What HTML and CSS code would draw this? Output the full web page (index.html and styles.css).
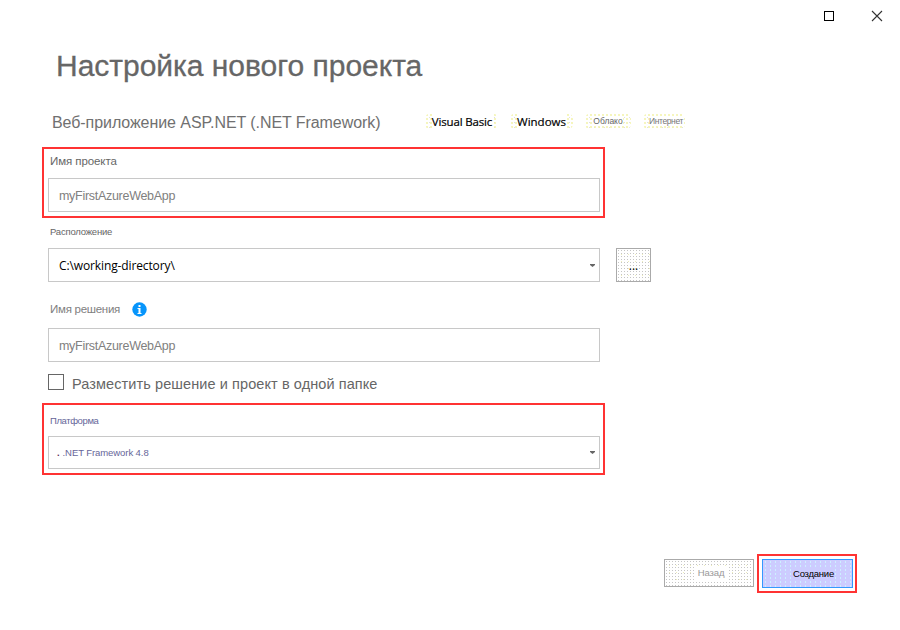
FILE: index.html
```
<!DOCTYPE html>
<html lang="ru">
<head>
<meta charset="utf-8">
<title>Настройка нового проекта</title>
<link rel="stylesheet" href="styles.css">
</head>
<body>
<main class="window">
  <header class="titlebar">
    <svg width="12" height="12" viewBox="0 0 12 12"><rect x="1.5" y="1.5" width="9" height="9" fill="none" stroke="#000"/></svg>
    <svg width="12" height="12" viewBox="0 0 12 12"><path d="M1 1l10 10M11 1L1 11" stroke="#333" stroke-width="1.1"/></svg>
  </header>
  <h1><span>Настройка нового проекта</span></h1>
  <div class="summary">
    <span class="template">Веб-приложение ASP.NET (.NET Framework)</span>
    <span class="tag basic"><b>Visual Basic</b></span>
    <span class="tag windows"><b>Windows</b></span>
    <span class="tag cloud"><b>Облако</b></span>
    <span class="tag web"><b>Интернет</b></span>
  </div>
  <section class="marked project">
    <div class="label">Имя проекта</div>
    <div class="field muted"><span>myFirstAzureWebApp</span></div>
  </section>
  <section class="group location">
    <div class="label small">Расположение</div>
    <div class="row">
      <div class="field path"><span>C:\working-directory\</span><svg class="arrow" width="5" height="3" viewBox="0 0 5 3"><path d="M0 0h5v1L2.500 3L0 1z" fill="#666"/></svg></div>
      <div class="browse dither">...</div>
    </div>
  </section>
  <section class="group solution">
    <div class="label solution-label"><span>Имя решения</span><svg width="15" height="15" viewBox="0 0 15 15"><circle cx="7.500" cy="7.500" r="7.200" fill="#0795fb"/><path d="M6.500 3h2v2h-2zM5.500 6h3v5h1v1h-4v-1h1V7h-1z" fill="#fff"/></svg></div>
    <div class="field muted"><span>myFirstAzureWebApp</span></div>
  </section>
  <div class="check"><span class="box"></span><span class="check-text">Разместить решение и проект в одной папке</span></div>
  <section class="marked platform">
    <div class="label small">Платформа</div>
    <div class="field"><span><i>.</i>.NET Framework 4.8</span><svg class="arrow" width="5" height="3" viewBox="0 0 5 3"><path d="M0 0h5v1L2.500 3L0 1z" fill="#666"/></svg></div>
  </section>
  <footer>
    <div class="button dither"><span class="back">Назад</span></div>
    <div class="marked action"><div class="button create"><span>Создание</span></div></div>
  </footer>
</main>
</body>
</html>
```

FILE: styles.css
```
* { box-sizing: border-box; }
body { margin: 0; background: #fff; font-family: "Liberation Sans", Arial, sans-serif; color: #666; }
.window { width: 900px; height: 630px; overflow: hidden; }
svg { display: block; flex: none; }
.titlebar { height: 32px; display: flex; justify-content: flex-end; align-items: center; gap: 36px; padding-right: 17px; }
h1 { margin: 14px 0 0 56px; height: 40px; font-size: 30px; line-height: 40px; font-weight: 400; letter-spacing: -.02px; white-space: nowrap; -webkit-text-stroke: .3px #666; }
.summary { display: flex; align-items: center; height: 24px; margin: 23px 0 0 52px; white-space: nowrap; }
.template { width: 373px; font-size: 16px; line-height: 24px; padding-top: 3px; letter-spacing: -.07px; color: #707070; }
.tag { height: 17px; line-height: 17px; border-radius: 6px; text-align: center; background: radial-gradient(circle, #f2f2a6 0.600px, transparent 1px) 0 0 / 4px 4px, radial-gradient(circle, #dedede 0.600px, transparent 1px) 2px 2px / 5px 5px; }
.tag b { background: #fff; font-weight: 400; }
.basic { width: 73px; padding-left: 1px; font: 11.5px/17px "Open Sans", sans-serif; letter-spacing: -.16px; color: #000; }
.windows { width: 63px; margin-left: 12px; font: 11.5px/17px "Open Sans", sans-serif; color: #000; }
.basic, .windows { -webkit-text-stroke: .2px #000; }
.cloud { width: 46px; margin-left: 12px; font-size: 8.500px; }
.web { width: 42px; margin-left: 12px; padding-left: 4px; font-size: 8.500px; letter-spacing: -.4px; color: #777; }
.marked { border: 2px solid #ff3333; }
.project { margin: 14px 0 0 42px; width: 563px; height: 71px; padding: 0 3px 0 4px; }
.label { height: 29px; padding-left: 2px; font-size: 11.500px; line-height: 25px; letter-spacing: -.08px; }
.small { font-size: 9.500px; letter-spacing: -.2px; }
.field { width: 552px; height: 34px; border: 1px solid #c8c8c8; padding: 0 4px 0 10px; display: flex; align-items: center; justify-content: space-between; font-size: 12px; white-space: nowrap; }
.muted { color: #808080; font-size: 12.500px; letter-spacing: -.29px; padding-top: 1px; }
.group { margin-left: 48px; }
.location { height: 64px; }
.location .label { height: 30px; line-height: 28px; }
.row { display: flex; gap: 16px; }
.path { font-family: "Open Sans", sans-serif; letter-spacing: -.12px; color: #000; }
.dither { border: 1px solid #aaa; background: radial-gradient(circle, #c5c5c5 .7px, transparent 1px) 0 0 / 3px 3px, radial-gradient(circle, #eeeebb .6px, transparent 1px) 1px 2px / 7px 7px; }
.browse { width: 35px; height: 34px; text-align: center; font: 12px/34px "Open Sans", sans-serif; color: #000; }
.solution { margin-top: 19px; }
.solution-label { display: flex; align-items: center; gap: 12px; height: 27px; padding-bottom: 11px; color: #808080; line-height: 16px; letter-spacing: -.27px; }
.check { display: flex; align-items: center; gap: 8px; height: 16px; margin: 12px 0 0 48px; }
.box { width: 16px; height: 16px; border: 1px solid #666; }
.check-text { font-size: 14.500px; line-height: 16px; letter-spacing: .09px; padding-top: 3px; white-space: nowrap; }
.platform { margin: 13px 0 0 42px; width: 563px; height: 72px; padding: 0 3px 0 4px; color: #666699; }
.platform .label { height: 31px; line-height: 32px; letter-spacing: -.4px; }
.platform .field { height: 33px; font-size: 9.500px; letter-spacing: -.08px; padding-left: 8px; }
.platform i { margin-right: 3px; color: #603060; font-style: normal; font-weight: 700; }
footer { display: flex; align-items: flex-start; justify-content: flex-end; gap: 3px; height: 39px; margin: 79px 43px 0 0; }
footer > .button { margin-top: 5px; }
.button { width: 90px; height: 28px; font-size: 9.500px; line-height: 26px; text-align: center; color: #999; padding-left: 4px; letter-spacing: -.1px; }
.back { display: inline-block; padding: 0 3px; line-height: 14px; background: #fff; }
.action { width: 100px; height: 39px; padding: 3px; }
.create { width: 91px; height: 29px; padding-left: 12px; line-height: 27px; letter-spacing: -.25px; color: #000; border: 1px solid #3399ff; background: radial-gradient(circle, #ccf0ff .6px, transparent 1px) 0 0 / 5px 4px #ccccff; }
.create span { background: #ccccff; }
```
